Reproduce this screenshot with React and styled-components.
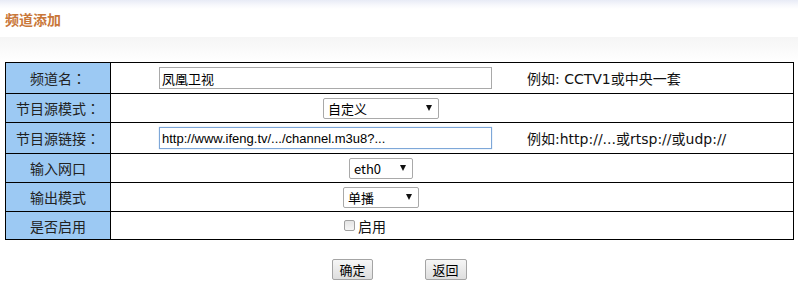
import React from "react";
import styled, { createGlobalStyle } from "styled-components";

const Global = createGlobalStyle`
  html, body { margin: 0; padding: 0; background: #fff; }
  body { font-family: "Liberation Sans", Arial, "Noto Sans CJK SC", sans-serif; font-size: 14px; color: #000; }
`;

const Page = styled.div`
  width: 798px;
  height: 296px;
  overflow: hidden;
`;

const Header = styled.div`
  height: 37px;
  box-sizing: border-box;
  padding: 10px 0 0 5px;
  background: linear-gradient(#e8ebf6 0px, #f7f8fc 5px, #ffffff 9px);
`;

const Title = styled.h1`
  margin: 0;
  font-family: "Noto Sans CJK SC", sans-serif;
  font-size: 14px;
  font-weight: bold;
  line-height: 18px;
  color: #c9773a;
`;

const Band = styled.div`
  height: 25px;
  background: linear-gradient(#f5f5f5, #fbfbfb 60%, #ffffff);
`;

const Table = styled.div`
  margin-left: 5px;
  width: 789px;
  box-sizing: border-box;
  border: 1px solid #000;
`;

const Row = styled.div`
  display: grid;
  grid-template-columns: 105px 1fr;
  height: ${(p) => p.$h}px;
  & + & { border-top: 1px solid #000; }
`;

const Label = styled.div`
  background: #9cc9f3;
  border-right: 1px solid #000;
  display: flex;
  align-items: center;
  justify-content: center;
  font-family: "Noto Sans CJK SC", sans-serif;
  font-size: 14px;
  color: #222;
`;

const Colon = styled.span`
  font-family: "Noto Sans CJK TC", sans-serif;
`;

const Cell = styled.div`
  display: flex;
  align-items: center;
  width: 540px;
  justify-content: ${(p) => (p.$center ? "center" : "flex-start")};
  padding-left: ${(p) => (p.$center ? "0" : "48px")};
  box-sizing: border-box;
  white-space: nowrap;
`;

const TextInput = styled.input`
  width: 333px;
  height: 22px;
  box-sizing: border-box;
  border: 1px solid ${(p) => (p.$focus ? "#7ea7d8" : "#a9a9a9")};
  box-shadow: ${(p) => (p.$focus ? "0 0 1px #9cc0ea" : "none")};
  padding: 0 2px;
  font-family: "Liberation Sans", Arial, "Noto Sans CJK SC", sans-serif;
  font-size: 13px;
  color: #000;
  outline: none;
  flex-shrink: 0;
`;

const Example = styled.span`
  margin-left: 35px;
  font-family: "DejaVu Sans", "Noto Sans CJK SC", sans-serif;
  font-size: 14px;
  color: #111;
`;

const SelectWrap = styled.span`
  position: relative;
  display: inline-block;
  width: ${(p) => p.$w}px;
  height: 21px;
`;

const Select = styled.select`
  appearance: none;
  -webkit-appearance: none;
  width: 100%;
  height: 100%;
  box-sizing: border-box;
  border: 1px solid #a9a9a9;
  border-radius: 2px;
  background: #fff;
  padding: 0 0 0 4px;
  font-family: "Noto Sans CJK SC", "Liberation Sans", sans-serif;
  font-size: 13px;
  color: #000;
  outline: none;
`;

const Arrow = styled.span`
  position: absolute;
  right: 7px;
  top: 7px;
  width: 0;
  height: 0;
  border-left: 3.5px solid transparent;
  border-right: 3.5px solid transparent;
  border-top: 6px solid #111;
  pointer-events: none;
`;

const CheckLabel = styled.label`
  display: inline-flex;
  align-items: center;
  font-family: "Noto Sans CJK SC", sans-serif;
  font-size: 14px;
  color: #111;
  margin-left: -32px;
`;

const Box = styled.span`
  width: 11px;
  height: 11px;
  box-sizing: border-box;
  border: 1px solid #a0a0a0;
  border-radius: 2px;
  background: linear-gradient(#e4e4e4, #f6f6f6);
  margin-right: 3px;
`;

const Buttons = styled.div`
  display: flex;
  justify-content: center;
  gap: 52px;
  margin-top: 19px;
  padding-left: 1px;
`;

const Button = styled.button`
  height: 21px;
  padding: 0 ${(p) => p.$px}px;
  box-sizing: border-box;
  border: 1px solid #a4a4a4;
  border-radius: 2px;
  background: linear-gradient(#f6f6f6, #dedede);
  font-family: "Noto Sans CJK SC", sans-serif;
  font-size: 13px;
  color: #000;
  line-height: 19px;
`;

function Dropdown({ width, value }) {
  return (
    <SelectWrap $w={width}>
      <Select defaultValue={value}>
        <option>{value}</option>
      </Select>
      <Arrow />
    </SelectWrap>
  );
}

export default function App() {
  return (
    <Page>
      <Global />
      <Header>
        <Title>频道添加</Title>
      </Header>
      <Band />
      <Table>
        <Row $h={30}>
          <Label>频道名<Colon>：</Colon></Label>
          <Cell>
            <TextInput defaultValue="凤凰卫视" />
            <Example>例如: CCTV1或中央一套</Example>
          </Cell>
        </Row>
        <Row $h={28}>
          <Label>节目源模式<Colon>：</Colon></Label>
          <Cell $center>
            <Dropdown width={116} value="自定义" />
          </Cell>
        </Row>
        <Row $h={30}>
          <Label>节目源链接<Colon>：</Colon></Label>
          <Cell>
            <TextInput $focus defaultValue="http://www.ifeng.tv/.../channel.m3u8?..." />
            <Example>例如:http://...或rtsp://或udp://</Example>
          </Cell>
        </Row>
        <Row $h={28}>
          <Label>输入网口</Label>
          <Cell $center>
            <Dropdown width={64} value="eth0" />
          </Cell>
        </Row>
        <Row $h={28}>
          <Label>输出模式</Label>
          <Cell $center>
            <Dropdown width={76} value="单播" />
          </Cell>
        </Row>
        <Row $h={27}>
          <Label>是否启用</Label>
          <Cell $center>
            <CheckLabel>
              <Box />
              启用
            </CheckLabel>
          </Cell>
        </Row>
      </Table>
      <Buttons>
        <Button $px={6}>确定</Button>
        <Button $px={7}>返回</Button>
      </Buttons>
    </Page>
  );
}
